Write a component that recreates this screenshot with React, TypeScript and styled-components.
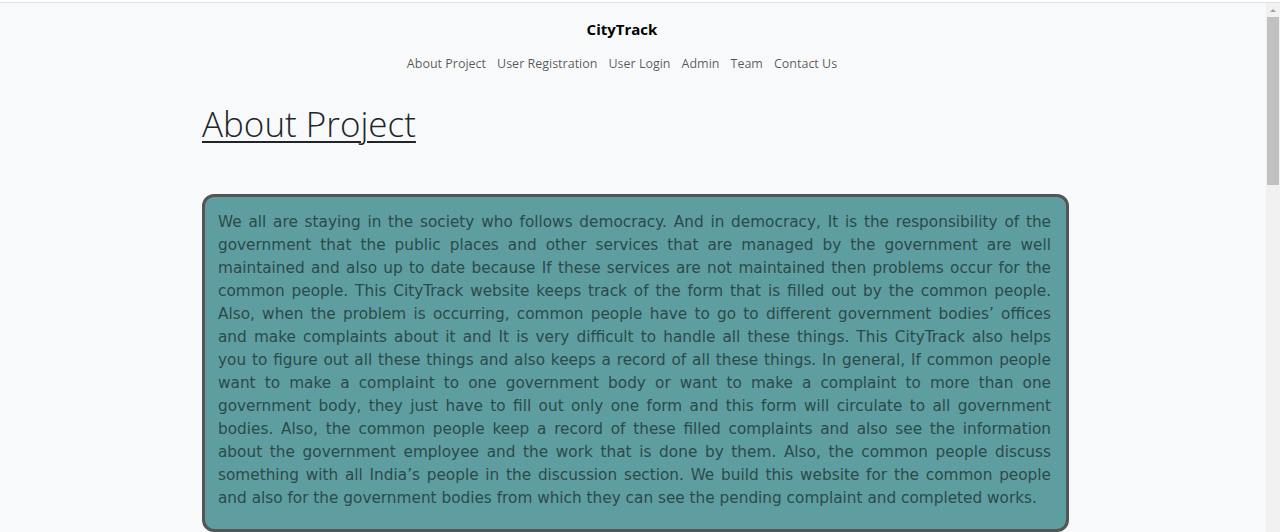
import React from "react";
import styled, { createGlobalStyle } from "styled-components";

const GlobalStyle = createGlobalStyle`
  html { background: #f8f9fa; }
  body {
    margin: 0;
    padding-right: 14px;
    background: #f8f9fa;
    font-family: "Open Sans", "Liberation Sans", sans-serif;
  }
`;

const TopEdge = styled.div`
  height: 2px;
  margin-right: -14px;
  background: #ffffff;
  border-bottom: 1px solid #dcdfe3;
`;

const ScrollRail = styled.div`
  position: fixed;
  top: 3px;
  right: 0;
  bottom: 0;
  width: 14px;
  background: #f1f1f1;
  display: flex;
  flex-direction: column;
  align-items: center;
`;

const ScrollArrow = styled.div`
  width: 0;
  height: 0;
  margin-top: 6px;
  border-left: 3.5px solid transparent;
  border-right: 3.5px solid transparent;
  border-bottom: 3.5px solid #a3a3a3;
`;

const ScrollThumb = styled.div`
  width: 12px;
  height: 168px;
  margin-top: 5px;
  background: #c1c1c1;
`;

const Header = styled.header`
  display: flex;
  flex-direction: column;
  align-items: center;
  padding: 15px 22px 0 0;
`;

const Brand = styled.div`
  font-size: 15px;
  font-weight: 700;
  line-height: 22.5px;
  color: #000;
`;

const Nav = styled.nav`
  display: flex;
  gap: 11px;
  margin-top: 13.5px;
`;

const NavLink = styled.a`
  font-size: 12.5px;
  line-height: 20px;
  color: rgba(0, 0, 0, 0.66);
  text-decoration: none;
`;

const Main = styled.main`
  width: 867px;
  margin: 0 auto;
  padding: 27.5px 0 60px 5px;
`;

const Title = styled.h1`
  margin: 0;
  font-size: 35px;
  font-weight: 300;
  line-height: 44.4px;
  color: #212529;
  text-decoration: underline;
  text-decoration-thickness: 2px;
  text-underline-offset: 4px;
`;

const InfoBox = styled.section`
  margin-top: 48px;
  background: #5f9ea0;
  border: 3px solid #555555;
  border-radius: 12px;
  padding: 14px 15px 19px 13px;
`;

const InfoText = styled.p`
  margin: 0;
  font-family: "DejaVu Sans", Verdana, sans-serif;
  font-size: 15.3px;
  line-height: 23px;
  color: #2b4a4a;
`;

const TextLine = styled.span<{ $last?: boolean }>`
  display: block;
  white-space: nowrap;
  text-align: ${(p) => (p.$last ? "left" : "justify")};
  text-align-last: ${(p) => (p.$last ? "left" : "justify")};
`;

const links = ["About Project", "User Registration", "User Login", "Admin", "Team", "Contact Us"];

const lines = [
  "We all are staying in the society who follows democracy. And in democracy, It is the responsibility of the",
  "government that the public places and other services that are managed by the government are well",
  "maintained and also up to date because If these services are not maintained then problems occur for the",
  "common people. This CityTrack website keeps track of the form that is filled out by the common people.",
  "Also, when the problem is occurring, common people have to go to different government bodies\u2019 offices",
  "and make complaints about it and It is very difficult to handle all these things. This CityTrack also helps",
  "you to figure out all these things and also keeps a record of all these things. In general, If common people",
  "want to make a complaint to one government body or want to make a complaint to more than one",
  "government body, they just have to fill out only one form and this form will circulate to all government",
  "bodies. Also, the common people keep a record of these filled complaints and also see the information",
  "about the government employee and the work that is done by them. Also, the common people discuss",
  "something with all India\u2019s people in the discussion section. We build this website for the common people",
  "and also for the government bodies from which they can see the pending complaint and completed works.",
];

export default function App() {
  return (
    <>
      <GlobalStyle />
      <TopEdge />
      <ScrollRail>
        <ScrollArrow />
        <ScrollThumb />
      </ScrollRail>
      <Header>
        <Brand>CityTrack</Brand>
        <Nav>
          {links.map((l) => (
            <NavLink key={l} href="#">
              {l}
            </NavLink>
          ))}
        </Nav>
      </Header>
      <Main>
        <Title>About Project</Title>
        <InfoBox>
          <InfoText>
            {lines.map((l, i) => (
              <TextLine key={i} $last={i === lines.length - 1}>
                {l}
              </TextLine>
            ))}
          </InfoText>
        </InfoBox>
      </Main>
    </>
  );
}
